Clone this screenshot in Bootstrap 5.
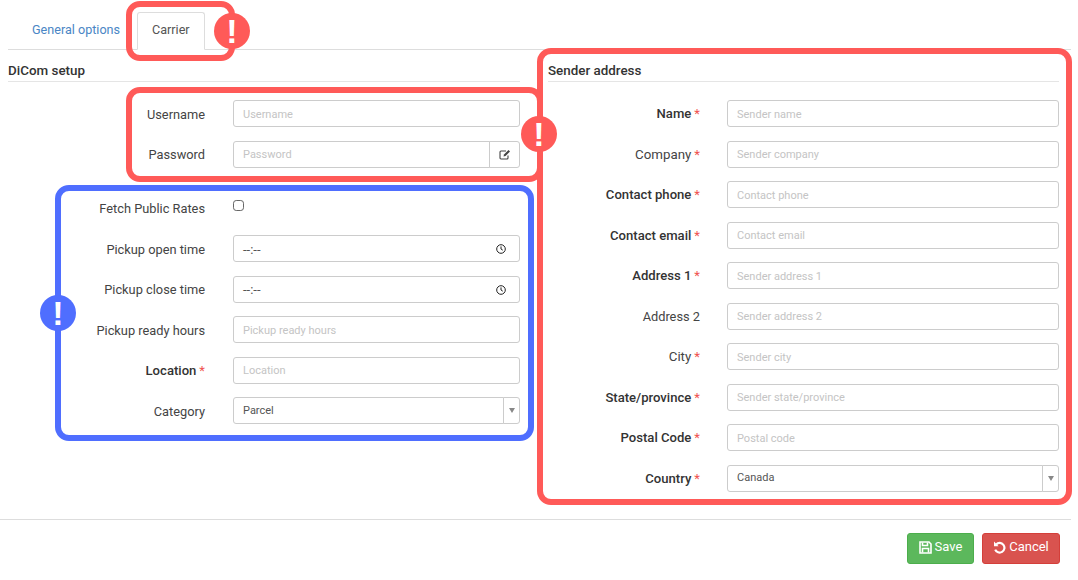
<!DOCTYPE html>
<html lang="en">
<head>
  <meta charset="UTF-8" />
  <meta name="viewport" content="width=device-width, initial-scale=1.0"/>
  <title>Carrier setup</title>
  <link href="https://cdn.jsdelivr.net/npm/bootstrap@5.3.3/dist/css/bootstrap.min.css" rel="stylesheet">
  <style>
    body { font-family: Roboto, "Liberation Sans", sans-serif; font-size: 13px; color: #333; background: #fff; }
    .page-wrap { position: relative; width: 1078px; height: 580px; overflow: hidden; }
    .page-inner { width: 1071px; }

    .tab-bar { margin: 0 0 0 8px; padding: 12px 0 0 9px; border-bottom: 1px solid #ddd; height: 50px; }
    .tab-bar .nav-link { font-size: 12.6px; line-height: 18px; padding: 8px 14px 10px; margin-right: 2px; color: #4a86c5; border-radius: 3px 3px 0 0; height: 38px; }
    .tab-bar .nav-link.active { color: #555; border-color: #ddd #ddd #fff; }

    .form-cols { padding-left: 8px; gap: 28px; }
    .form-col { width: 512px; }
    .form-col-right { width: 511px; }
    .sect-title { font-size: 13.4px; font-weight: 500; line-height: 16px; padding: 13px 0 2px; margin: 0 0 18px; border-bottom: 1px solid #e5e5e5; height: 32px; }

    .field-row { display: flex; align-items: center; height: 27px; margin-bottom: 13.5px; }
    .field-row-gap { margin-bottom: 27px; }
    .field-label { width: 197px; margin: 0 28px 0 0; padding-top: 1.5px; text-align: right; font-size: 12.8px; color: #444; flex: none; }
    .form-col-right .field-label { width: 152px; margin-right: 27px; }
    .field-label.req { font-size: 13.1px; font-weight: 500; color: #333; }
    .field-label.req.fw-normal { font-size: 13.3px; color: #444; }
    .field-label.req::after { content: "*"; color: #f0524f; font-weight: 400; margin-left: 3px; }
    .field-ctl { flex: 1; min-width: 0; }

    .form-control, .form-select, .input-group-text { font-size: 11px; height: 27px; min-height: 27px; border: 1px solid #ccc; border-radius: 3px; padding: 1px 9px 0; color: #555; background-image: none; }
    .form-select { padding-right: 9px; }
    .form-control::placeholder { color: #c4c4c4; }
    .input-group-text { background: #fff; padding: 0; justify-content: center; }
    .edit-addon { width: 31px; }
    .arrow-addon { width: 17px; }
    .arrow-glyph { width: 0; height: 0; border-left: 3px solid transparent; border-right: 3px solid transparent; border-top: 5px solid #888; }
    .time-box { display: flex; align-items: center; justify-content: space-between; line-height: 1; font-size: 13px; padding-right: 13px; }
    .pick-check { width: 11px; height: 11px; margin: -6px 0 0 0; border-color: #666; border-radius: 2px; display: block; }

    .foot-bar { position: absolute; left: 0; top: 519px; width: 1071px; border-top: 1px solid #ddd; padding: 13px 11px 0 0; gap: 8px; }
    .foot-bar .btn { font-size: 13px; height: 31px; padding: 0 0 3px; display: flex; align-items: center; justify-content: center; gap: 3px; border-radius: 3px; }
    .btn-keep { width: 67px; background: #5cb85c; border-color: #4cae4c; color: #fff; }
    .btn-drop { width: 78px; background: #d9534f; border-color: #d43f3a; color: #fff; }

    .mark-frame { position: absolute; border: 6px solid #ff5a58; border-radius: 14px; pointer-events: none; }
    .mark-blue { border-color: #4f6eff; }
    .mark-dot { position: absolute; width: 36px; height: 36px; border-radius: 50%; background: #ff5a58; color: #fff; font: 700 34px/36px "Liberation Sans", sans-serif; text-align: center; pointer-events: none; }
    .mark-dot.mark-blue { background: #4f6eff; }
    .f1 { left: 126px; top: 1px; width: 109px; height: 60px; }
    .f2 { left: 126px; top: 87px; width: 417px; height: 95px; }
    .f3 { left: 55px; top: 185px; width: 479px; height: 256px; }
    .f4 { left: 537px; top: 48px; width: 535px; height: 457px; }
    .d1 { left: 214px; top: 13px; }
    .d2 { left: 521px; top: 116px; }
    .d3 { left: 40px; top: 295px; }
  </style>
</head>
<body>
  <div class="page-wrap">
    <div class="page-inner">
      <ul class="nav nav-tabs tab-bar">
        <li class="nav-item"><a class="nav-link" href="#">General options</a></li>
        <li class="nav-item"><a class="nav-link active" href="#">Carrier</a></li>
      </ul>

      <div class="d-flex form-cols">
        <div class="form-col">
          <h6 class="sect-title">DiCom setup</h6>
          <div class="field-row"><label class="field-label">Username</label><div class="field-ctl"><input class="form-control" placeholder="Username"></div></div>
          <div class="field-row field-row-gap"><label class="field-label">Password</label><div class="field-ctl">
            <div class="input-group">
              <input class="form-control" placeholder="Password">
              <span class="input-group-text edit-addon">
                <svg width="12" height="11" viewBox="0 0 12 11" fill="none"><path d="M9 6.5V9a1 1 0 0 1-1 1H2a1 1 0 0 1-1-1V3a1 1 0 0 1 1-1h5" stroke="#444" stroke-width="1.1"/><path d="M4.5 7.5l.5-2L9.5 1l1.5 1.5L6.5 7z" fill="#444"/></svg>
              </span>
            </div>
          </div></div>
          <div class="field-row"><label class="field-label fw-normal">Fetch Public Rates</label><div class="field-ctl"><input class="form-check-input pick-check" type="checkbox"></div></div>
          <div class="field-row"><label class="field-label">Pickup open time</label><div class="field-ctl">
            <div class="form-control time-box"><span>--:--</span>
              <svg width="10" height="10" viewBox="0 0 10 10" fill="none" stroke="#222"><circle cx="5" cy="5" r="4.3"/><path d="M5 2.4V5l1.8 1.2"/></svg>
            </div>
          </div></div>
          <div class="field-row"><label class="field-label">Pickup close time</label><div class="field-ctl">
            <div class="form-control time-box"><span>--:--</span>
              <svg width="10" height="10" viewBox="0 0 10 10" fill="none" stroke="#222"><circle cx="5" cy="5" r="4.3"/><path d="M5 2.4V5l1.8 1.2"/></svg>
            </div>
          </div></div>
          <div class="field-row"><label class="field-label">Pickup ready hours</label><div class="field-ctl"><input class="form-control" placeholder="Pickup ready hours"></div></div>
          <div class="field-row"><label class="field-label req">Location</label><div class="field-ctl"><input class="form-control" placeholder="Location"></div></div>
          <div class="field-row"><label class="field-label">Category</label><div class="field-ctl">
            <div class="input-group">
              <select class="form-select"><option>Parcel</option></select>
              <span class="input-group-text arrow-addon"><span class="arrow-glyph"></span></span>
            </div>
          </div></div>
        </div>

        <div class="form-col-right">
          <h6 class="sect-title">Sender address</h6>
          <div class="field-row"><label class="field-label req">Name</label><div class="field-ctl"><input class="form-control" placeholder="Sender name"></div></div>
          <div class="field-row"><label class="field-label req fw-normal">Company</label><div class="field-ctl"><input class="form-control" placeholder="Sender company"></div></div>
          <div class="field-row"><label class="field-label req">Contact phone</label><div class="field-ctl"><input class="form-control" placeholder="Contact phone"></div></div>
          <div class="field-row"><label class="field-label req">Contact email</label><div class="field-ctl"><input class="form-control" placeholder="Contact email"></div></div>
          <div class="field-row"><label class="field-label req">Address 1</label><div class="field-ctl"><input class="form-control" placeholder="Sender address 1"></div></div>
          <div class="field-row"><label class="field-label">Address 2</label><div class="field-ctl"><input class="form-control" placeholder="Sender address 2"></div></div>
          <div class="field-row"><label class="field-label req fw-normal">City</label><div class="field-ctl"><input class="form-control" placeholder="Sender city"></div></div>
          <div class="field-row"><label class="field-label req">State/province</label><div class="field-ctl"><input class="form-control" placeholder="Sender state/province"></div></div>
          <div class="field-row"><label class="field-label req">Postal Code</label><div class="field-ctl"><input class="form-control" placeholder="Postal code"></div></div>
          <div class="field-row"><label class="field-label req">Country</label><div class="field-ctl">
            <div class="input-group">
              <select class="form-select"><option>Canada</option></select>
              <span class="input-group-text arrow-addon"><span class="arrow-glyph"></span></span>
            </div>
          </div></div>
        </div>
      </div>

      <div class="foot-bar d-flex justify-content-end">
        <button class="btn btn-keep" type="button">
          <svg width="13" height="13" viewBox="0 0 13 13" fill="none" stroke="#fff" stroke-width="1.6"><path d="M1 1h9l2 2v9H1z"/><path d="M3.5 1.5v3h5v-3M3.5 11.5V7.5h6v4"/></svg>
          Save
        </button>
        <button class="btn btn-drop" type="button">
          <svg width="13" height="13" viewBox="0 0 13 13" fill="none" stroke="#fff" stroke-width="2.2"><path d="M3.2 3.4A4.8 4.8 0 1 1 2.2 8.6"/><path d="M1 .6v4.6h4.6z" fill="#fff" stroke="none"/></svg>
          Cancel
        </button>
      </div>
    </div>

    <div class="mark-frame f1"></div>
    <div class="mark-frame f3 mark-blue"></div>
    <div class="mark-frame f4"></div>
    <div class="mark-frame f2"></div>
    <div class="mark-dot d1">!</div>
    <div class="mark-dot d2">!</div>
    <div class="mark-dot d3 mark-blue">!</div>
  </div>
  <script src="https://cdn.jsdelivr.net/npm/bootstrap@5.3.3/dist/js/bootstrap.bundle.min.js"></script>
</body>
</html>
